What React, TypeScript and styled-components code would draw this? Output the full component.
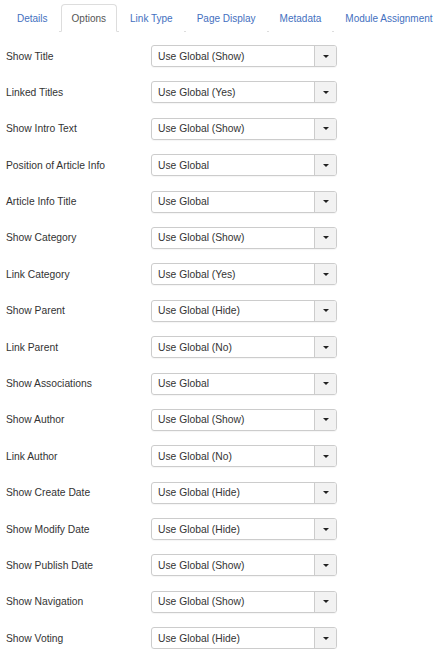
import React from "react";
import styled, { createGlobalStyle } from "styled-components";

const Global = createGlobalStyle`
  html, body { margin: 0; padding: 0; background: #fff; }
  body { font-family: "Liberation Sans", Arial, sans-serif; font-size: 10.3px; color: #333; }
`;

const Page = styled.div`
  padding: 4px 0 0 6px;
`;

const Tabs = styled.ul`
  list-style: none;
  margin: 0;
  padding: 0;
  display: flex;
  border-bottom: 1px solid #ddd;
  white-space: nowrap;
  font-size: 10px;
`;

const Tab = styled.li<{ $active?: boolean }>`
  margin-right: 2px;
  margin-bottom: -1px;
  padding: 0 10px;
  height: 28px;
  display: flex;
  align-items: center;
  box-sizing: border-box;
  border: 1px solid ${(p) => (p.$active ? "#ddd" : "transparent")};
  border-bottom-color: ${(p) => (p.$active ? "#fff" : "transparent")};
  border-radius: 4px 4px 0 0;
  background: #fff;
  color: ${(p) => (p.$active ? "#555" : "#4470c0")};
`;

const Form = styled.div`
  display: flex;
  flex-direction: column;
  gap: 14.4px;
  padding-top: 13px;
`;

const Row = styled.div`
  display: flex;
  align-items: center;
  height: 22px;
`;

const Label = styled.div`
  width: 145px;
  flex: none;
`;

const Select = styled.div`
  width: 186px;
  height: 22px;
  box-sizing: border-box;
  border: 1px solid #ccc;
  border-radius: 3px;
  display: flex;
  align-items: stretch;
  overflow: hidden;
  box-shadow: 0 1px 1px rgba(0, 0, 0, 0.04);
`;

const Value = styled.div`
  flex: 1;
  padding-left: 6px;
  display: flex;
  align-items: center;
  color: #333;
`;

const Toggle = styled.div`
  width: 21px;
  border-left: 1px solid #ccc;
  background: #f2f2f2;
  display: flex;
  align-items: center;
  justify-content: center;
`;

const Caret = styled.span`
  width: 0;
  height: 0;
  border-left: 3px solid transparent;
  border-right: 3px solid transparent;
  border-top: 3px solid #222;
`;

const tabs = ["Details", "Options", "Link Type", "Page Display", "Metadata", "Module Assignment"];

const rows: [string, string][] = [
  ["Show Title", "Use Global (Show)"],
  ["Linked Titles", "Use Global (Yes)"],
  ["Show Intro Text", "Use Global (Show)"],
  ["Position of Article Info", "Use Global"],
  ["Article Info Title", "Use Global"],
  ["Show Category", "Use Global (Show)"],
  ["Link Category", "Use Global (Yes)"],
  ["Show Parent", "Use Global (Hide)"],
  ["Link Parent", "Use Global (No)"],
  ["Show Associations", "Use Global"],
  ["Show Author", "Use Global (Show)"],
  ["Link Author", "Use Global (No)"],
  ["Show Create Date", "Use Global (Hide)"],
  ["Show Modify Date", "Use Global (Hide)"],
  ["Show Publish Date", "Use Global (Show)"],
  ["Show Navigation", "Use Global (Show)"],
  ["Show Voting", "Use Global (Hide)"],
];

export default function App() {
  return (
    <>
      <Global />
      <Page>
        <Tabs>
          {tabs.map((t) => (
            <Tab key={t} $active={t === "Options"}>
              {t}
            </Tab>
          ))}
        </Tabs>
        <Form>
          {rows.map(([l, v]) => (
            <Row key={l}>
              <Label>{l}</Label>
              <Select>
                <Value>{v}</Value>
                <Toggle>
                  <Caret />
                </Toggle>
              </Select>
            </Row>
          ))}
        </Form>
      </Page>
    </>
  );
}
